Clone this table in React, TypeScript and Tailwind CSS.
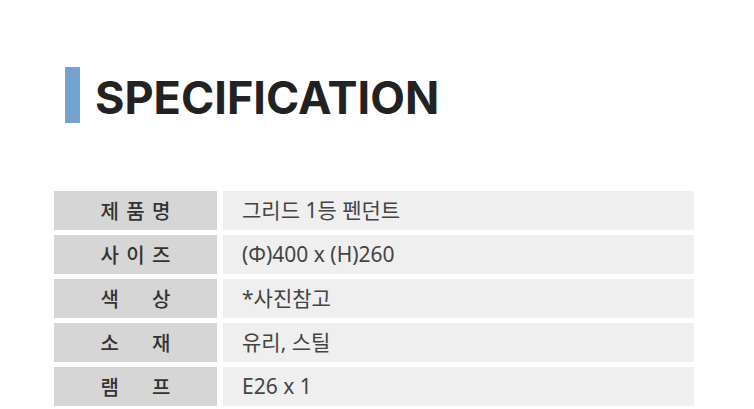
const rows: { label: string[]; value: string }[] = [
  { label: ['제', '품', '명'], value: '그리드 1등 펜던트' },
  { label: ['사', '이', '즈'], value: '(Φ)400 x (H)260' },
  { label: ['색', '상'], value: '*사진참고' },
  { label: ['소', '재'], value: '유리, 스틸' },
  { label: ['램', '프'], value: 'E26 x 1' },
];

export default function App() {
  return (
    <div className="w-[754px] h-[409px] bg-white overflow-hidden">
      <div className="pl-[54px] pr-[60px]">
        <div className="flex items-center pt-[67px] pl-[11px]">
          <div className="w-[15px] h-[56px] bg-[#74a3cf]" />
          <h1 className="ml-[15px] mt-[5px] text-[45px] leading-none font-bold text-[#222] font-['Inter',sans-serif]">
            SPECIFICATION
          </h1>
        </div>

        <div className="mt-[68px] flex flex-col gap-[5px] font-['Noto_Sans','Noto_Sans_CJK_KR',sans-serif]">
          {rows.map((row) => (
            <div key={row.value} className="flex gap-[6px] h-[39px]">
              <div className="w-[163px] bg-[#d6d6d6] flex items-center justify-center">
                <div className="w-[70px] flex justify-between text-[20px] font-medium text-[#333] font-['Noto_Sans_CJK_KR',sans-serif]">
                  {row.label.map((c, i) => (
                    <span key={i}>{c}</span>
                  ))}
                </div>
              </div>
              <div className="flex-1 bg-[#efefef] flex items-center pl-[19px] text-[21px] text-[#444]">
                {row.value}
              </div>
            </div>
          ))}
        </div>
      </div>
    </div>
  );
}
